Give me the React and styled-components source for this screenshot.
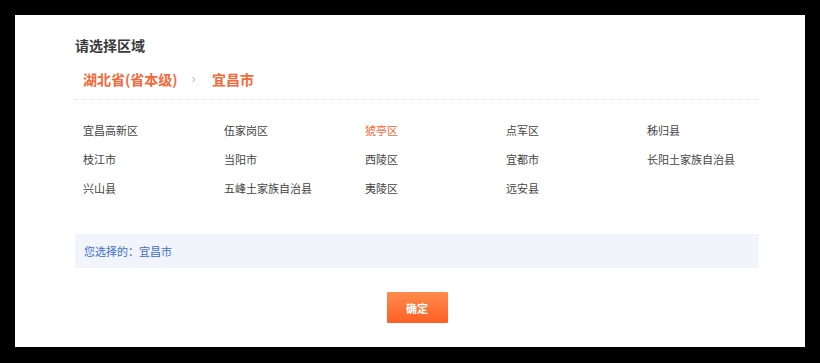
import React, { useState } from "react";
import styled, { createGlobalStyle } from "styled-components";

const GlobalStyle = createGlobalStyle`
  html, body {
    margin: 0;
    padding: 0;
    background: #000;
  }
  body {
    font-family: "Noto Sans CJK SC", "Noto Sans", sans-serif;
  }
`;

const Panel = styled.div`
  margin: 15px;
  width: 790px;
  height: 332px;
  box-sizing: border-box;
  background: #fff;
  padding: 20px 0 24px 60px;
`;

const Content = styled.div`
  width: 684px;
  display: flex;
  flex-direction: column;
`;

const Title = styled.h3`
  margin: 0;
  font-size: 14px;
  line-height: 20px;
  font-weight: 700;
  color: #3a3a3a;
`;

const Crumbs = styled.div`
  margin-top: 14px;
  padding: 0 0 10px 8px;
  border-bottom: 1px dotted #e0e0e0;
  display: flex;
  align-items: center;
  height: 20px;
`;

const Crumb = styled.span`
  font-size: 14px;
  line-height: 20px;
  font-weight: 700;
  color: #f5683a;
  cursor: pointer;
`;

const Sep = styled.span`
  font-size: 13px;
  line-height: 20px;
  color: #c4c4c4;
  margin: 0 16px 0 14px;
  font-family: "Liberation Sans", sans-serif;
`;

const Grid = styled.ul`
  list-style: none;
  margin: 16px 0 0;
  padding: 0 0 0 8px;
  display: grid;
  grid-template-columns: repeat(5, 141px);
  grid-auto-rows: 29px;
`;

const Item = styled.li`
  font-size: 11px;
  line-height: 29px;
  color: ${(p) => (p.$active ? "#f5683a" : "#444")};
  white-space: nowrap;
  cursor: pointer;
`;

const Picked = styled.div`
  margin-top: 31px;
  height: 34px;
  background: #f1f4fb;
  display: flex;
  align-items: center;
  padding-left: 9px;
  font-size: 11px;
  color: #3d6fcf;
`;

const Confirm = styled.button`
  margin: 24px auto 0;
  width: 61px;
  height: 31px;
  border: 0;
  border-radius: 1px;
  background: linear-gradient(180deg, #ff8b4d 0%, #ff5f24 100%);
  color: #fff;
  font-family: inherit;
  font-size: 11px;
  font-weight: 700;
  cursor: pointer;
`;

const districts = [
  "宜昌高新区", "伍家岗区", "猇亭区", "点军区", "秭归县",
  "枝江市", "当阳市", "西陵区", "宜都市", "长阳土家族自治县",
  "兴山县", "五峰土家族自治县", "夷陵区", "远安县",
];

export default function App() {
  const [active, setActive] = useState("猇亭区");

  return (
    <>
      <GlobalStyle />
      <Panel>
        <Content>
          <Title>请选择区域</Title>
          <Crumbs>
            <Crumb>湖北省(省本级)</Crumb>
            <Sep>›</Sep>
            <Crumb>宜昌市</Crumb>
          </Crumbs>
          <Grid>
            {districts.map((d) => (
              <Item key={d} $active={d === active} onClick={() => setActive(d)}>
                {d}
              </Item>
            ))}
          </Grid>
          <Picked>您选择的：宜昌市</Picked>
          <Confirm>确定</Confirm>
        </Content>
      </Panel>
    </>
  );
}
